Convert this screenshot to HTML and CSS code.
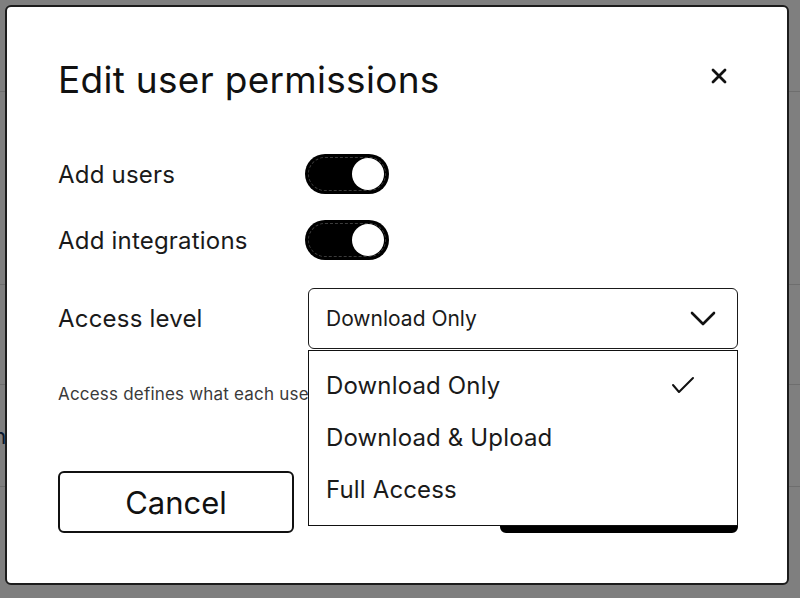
FILE: index.html
```html
<!DOCTYPE html>
<html lang="en">
<head>
<meta charset="utf-8">
<title>Edit user permissions</title>
<link rel="stylesheet" href="styles.css">
</head>
<body>
  <div class="page">
    <div class="page-row page-row--top"></div>
    <div class="page-row page-row--a"></div>
    <div class="page-row page-row--b"></div>
    <div class="page-row page-row--c"><span class="page-cell">Admin</span></div>
    <div class="page-row page-row--d"></div>
  </div>
  <div class="overlay"></div>

  <div class="modal" role="dialog" aria-labelledby="dlg-title">
    <header class="modal-head">
      <h2 id="dlg-title" class="modal-title">Edit user permissions</h2>
      <button class="close" aria-label="Close">
        <svg viewBox="0 0 16 16" width="16" height="16"><path d="M2 2 L14 14 M14 2 L2 14" stroke="#111" stroke-width="2.8" stroke-linecap="round" fill="none"/></svg>
      </button>
    </header>

    <div class="field field--first">
      <span class="label">Add users</span>
      <span class="toggle" role="switch" aria-checked="true"></span>
    </div>
    <div class="field field--second">
      <span class="label">Add integrations</span>
      <span class="toggle" role="switch" aria-checked="true"></span>
    </div>
    <div class="field field--select">
      <span class="label">Access level</span>
      <div class="select-wrap">
        <button class="select">
          <span>Download Only</span>
          <svg class="chevron" viewBox="0 0 26 15" width="26" height="15"><polyline points="2,2 13,13 24,2" fill="none" stroke="#111" stroke-width="2.6" stroke-linecap="round" stroke-linejoin="round"/></svg>
        </button>
        <ul class="menu" role="listbox">
          <li class="option option--selected" role="option" aria-selected="true">
            <span>Download Only</span>
            <svg class="check" viewBox="0 0 24 20" width="24" height="20"><polyline points="2,10 8,17 22,3" fill="none" stroke="#111" stroke-width="2" stroke-linecap="round" stroke-linejoin="round"/></svg>
          </li>
          <li class="option" role="option">Download &amp; Upload</li>
          <li class="option" role="option">Full Access</li>
        </ul>
      </div>
    </div>

    <p class="help"><span class="help-text">Access defines what each user can do in this workspace.</span></p>

    <div class="actions">
      <button class="btn btn--outline">Cancel</button>
      <button class="btn btn--primary">Save changes</button>
    </div>
  </div>
</body>
</html>
```

FILE: styles.css
```css
* { box-sizing: border-box; }

html, body {
  margin: 0;
  padding: 0;
}

body {
  width: 800px;
  height: 598px;
  overflow: hidden;
  background: #fff;
  font-family: "Inter", "Noto Sans", sans-serif;
  color: #111;
}

/* background page (dimmed) */
.page {
  display: flex;
  flex-direction: column;
  height: 598px;
}
.page-row {
  border-bottom: 1px solid #dcdcdc;
  display: flex;
  align-items: center;
}
.page-row--top { height: 92px; }
.page-row--a { height: 193px; }
.page-row--b { height: 100px; }
.page-row--c { height: 102px; }
.page-row--d { flex: 1; border-bottom: none; }
.page-cell {
  font-size: 22px;
  color: #12305a;
  margin-left: -60px;
}

.overlay {
  position: fixed;
  inset: 0;
  background: rgba(0, 0, 0, 0.5);
}

/* modal */
.modal {
  position: fixed;
  top: 5px;
  left: 5px;
  width: 784px;
  height: 580px;
  background: #fff;
  border: 2px solid #1c1c1c;
  border-radius: 6px;
  padding: 51px 49px 50px 51px;
  display: flex;
  flex-direction: column;
}

.modal-head {
  display: flex;
  justify-content: space-between;
  align-items: flex-start;
  height: 44px;
}
.modal-title {
  margin: 0;
  font-size: 37px;
  line-height: 44px;
  font-weight: 400;
  color: #111;
  letter-spacing: 0.3px;
}
.close {
  border: 0;
  background: none;
  padding: 0;
  margin: 10px 11px 0 0;
  width: 16px;
  height: 16px;
  display: flex;
}

.field {
  display: flex;
  align-items: center;
}
.field--first { margin-top: 52px; }
.field--second { margin-top: 26px; }
.field--select { margin-top: 28px; }

.label {
  width: 247px;
  font-size: 24px;
  letter-spacing: 0.2px;
  color: #1a1a1a;
}

.toggle {
  position: relative;
  width: 84px;
  height: 40px;
  border-radius: 20px;
  background: #000;
}
.toggle::before {
  content: "";
  position: absolute;
  inset: 3px;
  border-radius: 17px;
  border: 1px dashed #3c3c3c;
}
.toggle::after {
  content: "";
  position: absolute;
  top: 4px;
  right: 5px;
  width: 32px;
  height: 32px;
  border-radius: 50%;
  background: #fff;
}

.select-wrap {
  position: relative;
  flex: 1;
  margin-left: 3px;
}
.select {
  width: 100%;
  height: 61px;
  border: 1.5px solid #1a1a1a;
  border-radius: 6px;
  background: #fff;
  display: flex;
  align-items: center;
  justify-content: space-between;
  padding: 0 21px 0 17px;
  font-family: inherit;
  font-size: 21px;
  color: #1a1a1a;
}
.chevron { display: block; }

.menu {
  position: absolute;
  top: 62px;
  left: 0;
  right: 0;
  margin: 0;
  padding: 8px 0 10px;
  list-style: none;
  background: #fff;
  border: 1.5px solid #111;
  z-index: 5;
}
.option {
  height: 52px;
  display: flex;
  align-items: center;
  justify-content: space-between;
  padding: 0 42px 0 17px;
  font-size: 24px;
  letter-spacing: 0.15px;
  color: #1a1a1a;
}
.check { display: block; }

.help {
  margin: 35px 0 0;
  width: 250px;
  overflow: hidden;
  font-size: 17px;
  line-height: 20px;
  letter-spacing: 0.2px;
  color: #3a3a3a;
  white-space: nowrap;
}

.actions {
  margin-top: 67px;
  display: flex;
  justify-content: space-between;
}
.btn {
  height: 62px;
  border-radius: 6px;
  font-family: inherit;
  font-size: 31px;
}
.btn--outline {
  width: 236px;
  background: #fff;
  border: 2px solid #111;
  color: #111;
}
.btn--primary {
  width: 238px;
  background: #000;
  border: 2px solid #000;
  color: #fff;
}
```
